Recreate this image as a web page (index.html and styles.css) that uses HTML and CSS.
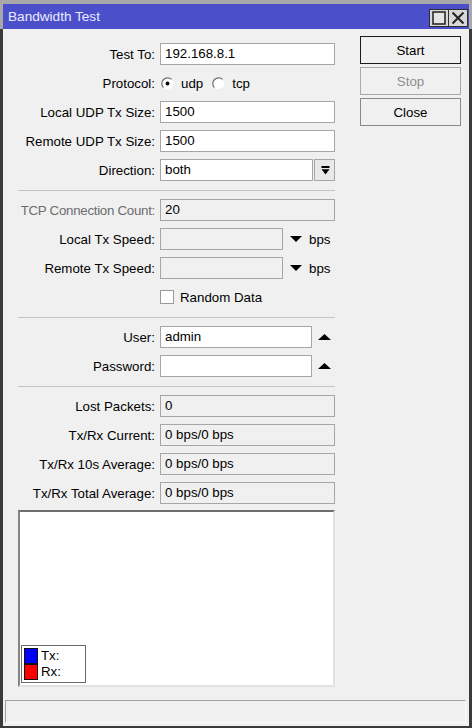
FILE: index.html
```html
<!DOCTYPE html>
<html>
<head>
<meta charset="utf-8">
<title>Bandwidth Test</title>
<link rel="stylesheet" href="styles.css">
</head>
<body>
<div class="window">
  <div class="titlebar">
    <span class="title">Bandwidth Test</span>
    <div class="tbtns">
      <span class="tbtn"><svg width="18" height="16" viewBox="0 0 18 16"><rect x="3" y="2" width="12" height="12" fill="#e4e4e4" stroke="#2a2a2a" stroke-width="1.6"/></svg></span>
      <span class="tbtn close"><svg width="18" height="16" viewBox="0 0 18 16"><path d="M3.5 2.5 L14.5 13.5 M14.5 2.5 L3.5 13.5" stroke="#222" stroke-width="2" fill="none"/></svg></span>
    </div>
  </div>
  <div class="body">
    <div class="main">
      <div class="form">
        <div class="row"><span class="label">Test To:</span><span class="input w175">192.168.8.1</span></div>
        <div class="row"><span class="label">Protocol:</span>
          <span class="radio"><svg width="13" height="13" viewBox="0 0 13 13"><circle cx="6.5" cy="6.5" r="5.8" fill="#fff"/><path d="M10.6 2.4 A5.8 5.8 0 0 0 2.4 10.6" stroke="#6e6e6e" stroke-width="1.2" fill="none"/><circle cx="6.5" cy="6.5" r="1.9" fill="#000"/></svg></span><span class="rtext">udp</span>
          <span class="radio"><svg width="13" height="13" viewBox="0 0 13 13"><circle cx="6.5" cy="6.5" r="5.8" fill="#fff"/><path d="M10.6 2.4 A5.8 5.8 0 0 0 2.4 10.6" stroke="#6e6e6e" stroke-width="1.2" fill="none"/></svg></span><span class="rtext">tcp</span>
        </div>
        <div class="row"><span class="label">Local UDP Tx Size:</span><span class="input w175">1500</span></div>
        <div class="row"><span class="label">Remote UDP Tx Size:</span><span class="input w175">1500</span></div>
        <div class="row"><span class="label">Direction:</span><span class="input w153">both</span><span class="ddbtn"><svg width="9" height="9" viewBox="0 0 9 9"><rect x="0.5" y="0" width="8" height="2" fill="#000"/><path d="M0.5 3.2 H8.5 L4.5 8.5 Z" fill="#000"/></svg></span></div>
        <div class="sep"></div>
        <div class="row"><span class="label disabled tight">TCP Connection Count:</span><span class="input ro w175">20</span></div>
        <div class="row"><span class="label">Local Tx Speed:</span><span class="input ro w123"></span><span class="tri"><svg width="12" height="6" viewBox="0 0 12 6"><path d="M0 0 H12 L6 6 Z" fill="#000"/></svg></span><span class="unit">bps</span></div>
        <div class="row"><span class="label">Remote Tx Speed:</span><span class="input ro w123"></span><span class="tri"><svg width="12" height="6" viewBox="0 0 12 6"><path d="M0 0 H12 L6 6 Z" fill="#000"/></svg></span><span class="unit">bps</span></div>
        <div class="row"><span class="label"></span><span class="check"></span><span class="ctext">Random Data</span></div>
        <div class="sep"></div>
        <div class="row"><span class="label">User:</span><span class="input w152">admin</span><span class="tri up"><svg width="13" height="6" viewBox="0 0 13 6"><path d="M0 6 H13 L6.5 0 Z" fill="#000"/></svg></span></div>
        <div class="row"><span class="label">Password:</span><span class="input w152"></span><span class="tri up"><svg width="13" height="6" viewBox="0 0 13 6"><path d="M0 6 H13 L6.5 0 Z" fill="#000"/></svg></span></div>
        <div class="sep"></div>
        <div class="row"><span class="label">Lost Packets:</span><span class="input ro w175">0</span></div>
        <div class="row"><span class="label">Tx/Rx Current:</span><span class="input ro w175">0 bps/0 bps</span></div>
        <div class="row"><span class="label">Tx/Rx 10s Average:</span><span class="input ro w175">0 bps/0 bps</span></div>
        <div class="row"><span class="label">Tx/Rx Total Average:</span><span class="input ro w175">0 bps/0 bps</span></div>
        <div class="graph">
          <div class="legend">
            <div class="litem"><span class="swatch tx"></span><span class="ltext">Tx:</span></div>
            <div class="litem"><span class="swatch rx"></span><span class="ltext">Rx:</span></div>
          </div>
        </div>
      </div>
      <div class="buttons">
        <div class="btn default">Start</div>
        <div class="btn dis">Stop</div>
        <div class="btn">Close</div>
      </div>
    </div>
    <div class="status"></div>
  </div>
</div>
</body>
</html>
```
FILE: styles.css
```css
* { box-sizing: border-box; }
html, body { margin: 0; padding: 0; }
body {
  width: 472px;
  height: 728px;
  font-family: "Liberation Sans", Arial, sans-serif;
  font-size: 13.3px;
  color: #000;
  background: #a8a8a8;
  overflow: hidden;
}
.window {
  width: 472px;
  height: 728px;
  display: flex;
  flex-direction: column;
  background: #a8a8a8;
  padding-top: 4px;
}
.titlebar {
  height: 25px;
  margin: 0 3px;
  background: #4b4fca;
  display: flex;
  justify-content: space-between;
  align-items: flex-start;
  padding: 0 1px 0 5px;
  flex: none;
}
.title {
  color: #ebebff;
  line-height: 25px;
  font-size: 13.6px;
}
.tbtns {
  display: flex;
  margin-top: 5px;
}
.tbtn {
  width: 20px;
  height: 18px;
  background: #d8d8d8;
  border: 1px solid #2e2e2e;
  display: flex;
  align-items: center;
  justify-content: center;
}
.tbtn.close { margin-left: -1px; }
.body {
  flex: 1;
  background: #f0f0f0;
  border-left: 3px solid #3a3a3a;
  border-right: 3px solid #3a3a3a;
  border-bottom: 2px solid #3a3a3a;
  display: flex;
  flex-direction: column;
}
.main {
  flex: 1;
  display: flex;
  padding-left: 15px;
}
.form {
  width: 317px;
  padding-top: 14px;
  display: flex;
  flex-direction: column;
  gap: 7px;
}
.row {
  height: 22px;
  display: flex;
  align-items: center;
  flex: none;
}
.label {
  width: 142px;
  padding-right: 5px;
  text-align: right;
  white-space: nowrap;
  flex: none;
}
.label.disabled { color: #6d6d6d; }
.label.tight { letter-spacing: -0.28px; }
.input {
  height: 22px;
  border: 1px solid #a6a6a6;
  background: #fff;
  padding: 0 4px;
  line-height: 20px;
  white-space: nowrap;
  flex: none;
}
.input.ro { background: #f0f0f0; }
.w175 { width: 175px; }
.w153 { width: 153px; }
.w152 { width: 152px; }
.w123 { width: 123px; }
.ddbtn {
  width: 21px;
  height: 22px;
  margin-left: 1px;
  background: #e9e9e9;
  border: 1px solid #a6a6a6;
  display: flex;
  align-items: center;
  justify-content: center;
  padding-left: 1px;
}
.ddbtn svg { display: block; }
.radio { display: flex; width: 13px; height: 13px; margin-left: 1px; }
.radio svg { display: block; }
.rtext { margin-left: 7px; margin-right: 8px; }
.tri { display: flex; margin-left: 7px; }
.tri svg { display: block; }
.tri.up { margin-left: 6px; }
.unit { margin-left: 7px; }
.check {
  width: 14px;
  height: 14px;
  background: #fff;
  border: 1px solid #9a9a9a;
  margin-left: 18px;
  flex: none;
}
.row .label:empty { width: 142px; }
.check { margin-left: 0; }
.ctext { margin-left: 6px; }
.sep {
  height: 1px;
  background: #c4c4c4;
  margin: 2px 0 1px;
  flex: none;
}
.graph {
  position: relative;
  margin-top: -1px;
  height: 177px;
  background: #fff;
  border: 2px solid #e2e2e2;
  border-top-color: #6f6f6f;
  border-left-color: #858585;
  flex: none;
}
.legend {
  position: absolute;
  left: 1px;
  bottom: 2px;
  width: 65px;
  height: 38px;
  background: #fff;
  border: 1px solid #6b6b6b;
  padding: 2px 0 0 2px;
}
.litem {
  display: flex;
  align-items: center;
  height: 16px;
}
.swatch {
  width: 14px;
  height: 16px;
  border: 1.5px solid #111;
  flex: none;
}
.swatch.tx { background: #0000ff; }
.swatch.rx { background: #ff0000; }
.ltext { margin-left: 3px; line-height: 16px; }
.buttons {
  width: 101px;
  margin-left: 25px;
  padding-top: 7px;
  display: flex;
  flex-direction: column;
  gap: 3px;
}
.btn {
  height: 28px;
  border: 1px solid #8a8a8a;
  background: #f0f0f0;
  display: flex;
  align-items: center;
  justify-content: center;
}
.btn.default { border-color: #1c1c1c; }
.btn.dis { border-color: #a8a8a8; color: #8d8d8d; }
.status {
  height: 23px;
  margin: 0 3px 3px 2px;
  border-top: 1px solid #a0a0a0;
  border-left: 1px solid #a0a0a0;
  border-right: 1px solid #fbfbfb;
  border-bottom: 1px solid #fbfbfb;
  flex: none;
}
```
